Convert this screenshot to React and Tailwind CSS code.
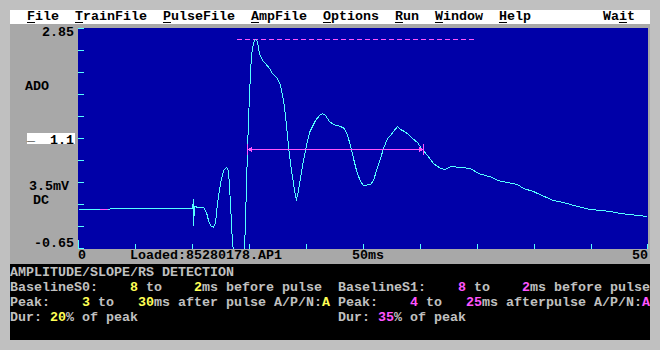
import React from "react";

const trace = [
  [78,209],[100,209],[120,208.5],[150,208],[180,208],[192,208],[193,199],[193,225],[194,206],[198,207],[203,207],[206,212],[208,220],[210,225],[213,227],[215,222],[217,203],[220,183],[223,170],[226,167],[228,170],[230,203],[232,243],[233,250],[244,250],[245,220],[246,185],[247,150],[248,120],[249,95],[250,72],[251,55],[253,42],[255,39],[257,41],[258,47],[259,53],[262,60],[265,63],[269,68],[272,73],[277,78],[280,85],[281,90],[283,100],[285,115],[287,135],[289,155],[291,170],[293,183],[295,196],[296,199],[298,190],[300,177],[303,160],[306,145],[309,132],[312,126],[315,120],[319,115],[322,113],[325,115],[329,121],[333,124],[340,126],[344,128],[347,135],[350,145],[353,158],[356,170],[360,181],[363,185],[370,184],[373,180],[376,170],[380,158],[383,148],[387,138],[390,135],[393,131],[397,126],[400,129],[404,131],[408,134],[412,138],[417,142],[421,148],[427,155],[433,163],[440,168],[445,169],[450,166],[470,168],[478,173],[492,177],[497,180],[517,184],[523,188],[533,191],[537,193],[553,200],[563,202],[577,206],[590,209],[610,211],[620,213],[647,216]
];

function Plot() {
  const ticks = [0,1,2,3,4,5,6,7,8,9,10];
  return (
    <svg width="570" height="221" viewBox="78 28 570 221" className="block" shapeRendering="crispEdges">
      <rect x="78" y="28" width="570" height="221" fill="#0000a8" />
      {ticks.map((i) => (
        <line key={"l" + i} x1="78" x2="84" y1={28.5 + i * 22} y2={28.5 + i * 22} stroke="#55ffff" strokeWidth="1" />
      ))}
      {ticks.map((i) => (
        <line key={"b" + i} x1={78.5 + Math.min(i * 57, 569)} x2={78.5 + Math.min(i * 57, 569)} y1="244" y2="249" stroke="#55ffff" strokeWidth="1" />
      ))}
      <line x1="78.5" x2="78.5" y1="240" y2="249" stroke="#55ffff" strokeWidth="1" />
      <line x1="237" x2="475" y1="39.5" y2="39.5" stroke="#ff55ff" strokeWidth="1" strokeDasharray="5 3" />
      <polyline points={trace.map((p) => (p[0] + 0.5) + "," + (Math.floor(p[1]) + 0.5)).join(" ")} fill="none" stroke="#55ffff" strokeWidth="1" />
      <line x1="100" x2="108" y1="209.5" y2="209.5" stroke="#ff55ff" strokeWidth="1" />
      <line x1="247" x2="423" y1="149.5" y2="149.5" stroke="#ff55ff" strokeWidth="1" />
      <line x1="247.5" x2="247.5" y1="144" y2="155" stroke="#ff55ff" strokeWidth="1" />
      <line x1="423.5" x2="423.5" y1="144" y2="155" stroke="#ff55ff" strokeWidth="1" />
      <polygon points="248,149.5 252,146.5 252,152.5" fill="#ff55ff" />
      <polygon points="423,149.5 419,146.5 419,152.5" fill="#ff55ff" />
    </svg>
  );
}

const U = ({ children }) => (
  <span className="underline decoration-1 underline-offset-[2px]">{children}</span>
);
const Y = ({ children }) => <span className="text-[#ffff55]">{children}</span>;
const M = ({ children }) => <span className="text-[#ff55ff]">{children}</span>;

export default function App() {
  return (
    <div className="w-[660px] h-[350px] bg-[#c0c0c0] pt-[10px] px-[10px] font-['Liberation_Mono',monospace] font-bold text-[13.333px] text-black">
      <div className="w-[640px]">
        <div className="h-[14px] bg-white leading-[14px] pl-[17px] whitespace-pre">
          <U>F</U>ile  <U>T</U>rainFile  <U>P</U>ulseFile  <U>A</U>mpFile  <U>O</U>ptions  <U>R</U>un  <U>W</U>indow  <U>H</U>elp         Wa<U>i</U>t
        </div>
        <div className="h-[240px] bg-[#a8a8a8] flex">
          <div className="w-[68px] flex flex-col leading-[14px]">
            <div className="mt-[2px] h-[14px] text-right pr-[4px]">2.85</div>
            <div className="mt-[40px] h-[14px] pl-[15px]">ADO</div>
            <div className="mt-[39px] ml-[17px] w-[48px] h-[11px] bg-white flex justify-between items-start leading-[11px] pr-[1px]">
              <span className="relative -top-[2px]">_</span>
              <span className="relative top-[2px]">1.1</span>
            </div>
            <div className="mt-[36px] h-[14px] pl-[19px]">3.5mV</div>
            <div className="h-[14px] pl-[23px]">DC</div>
            <div className="mt-[29px] h-[14px] text-right pr-[4px]">-0.65</div>
          </div>
          <div className="w-[570px] flex flex-col">
            <div className="mt-[4px]">
              <Plot />
            </div>
            <div className="h-[15px] leading-[14px] flex whitespace-pre">
              <span className="w-[52px]">0</span>
              <span className="w-[222px]">Loaded:85280178.AP1</span>
              <span className="flex-1">50ms</span>
              <span>50</span>
            </div>
          </div>
        </div>
        <div className="h-[76px] bg-black text-[#c0c0c0] leading-[15px] pt-[1px] flex whitespace-pre overflow-hidden">
          <div className="w-[328px]">
            <div>AMPLITUDE/SLOPE/RS DETECTION</div>
            <div>BaselineS0:    <Y>8</Y> to    <Y>2</Y>ms before pulse</div>
            <div>Peak:    <Y>3</Y> to   <Y>30</Y>ms after pulse A/P/N:<Y>A</Y></div>
            <div>Dur: <Y>20</Y>% of peak</div>
          </div>
          <div className="flex-1 overflow-hidden">
            <div> </div>
            <div>BaselineS1:    <M>8</M> to    <M>2</M>ms before pulse</div>
            <div>Peak:    <M>4</M> to   <M>25</M>ms afterpulse A/P/N:<M>A</M></div>
            <div>Dur: <M>35</M>% of peak</div>
          </div>
        </div>
      </div>
    </div>
  );
}
